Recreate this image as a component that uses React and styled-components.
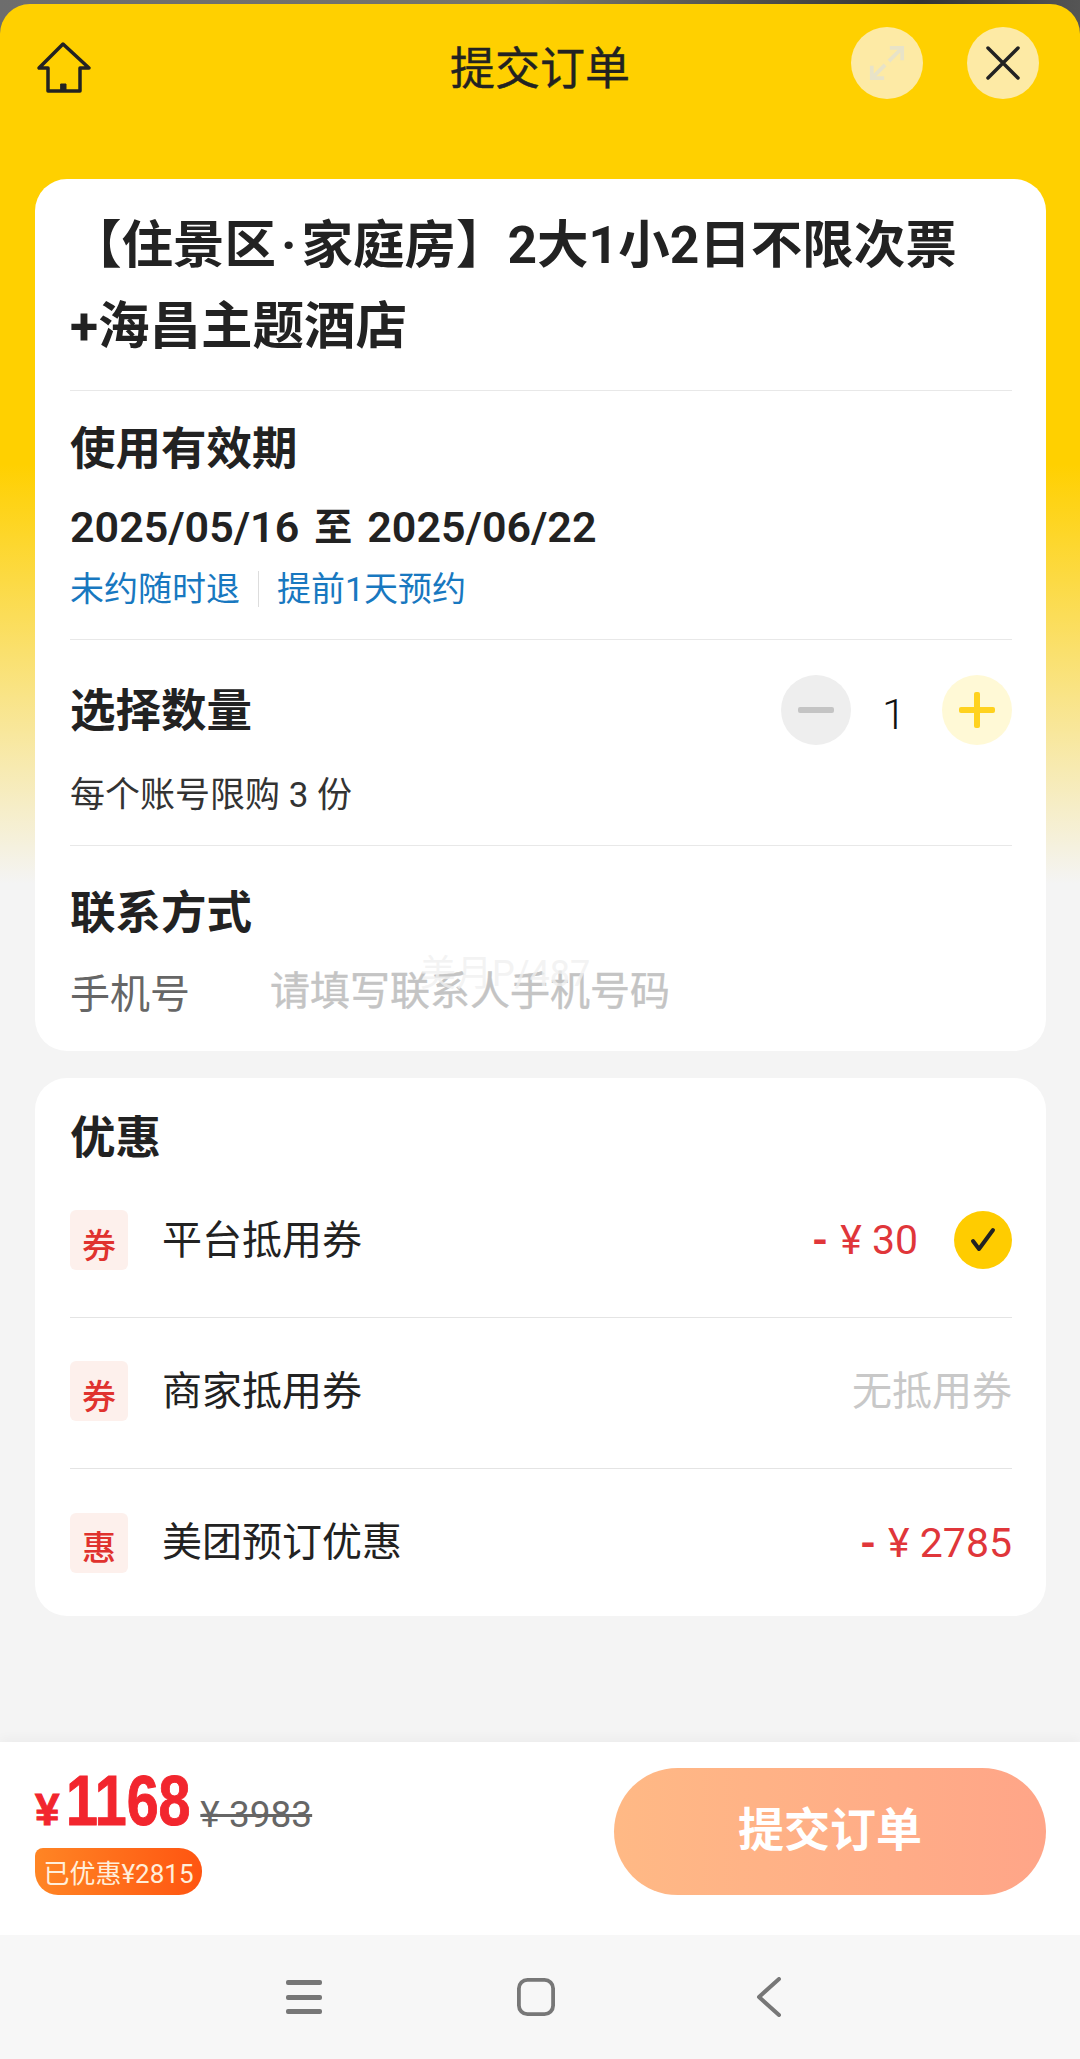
import React from 'react'
import styled, { createGlobalStyle } from 'styled-components'

const GlobalStyle = createGlobalStyle`
  html, body {
    margin: 0;
    padding: 0;
    background: #f7f7f7;
  }
  * {
    box-sizing: border-box;
  }
  body {
    font-family: Roboto, "Noto Sans CJK SC", sans-serif;
    color: #222;
  }
`

const Screen = styled.div`
  width: 1080px;
  height: 2059px;
  display: flex;
  flex-direction: column;
  padding-top: 4px;
  overflow: hidden;
  background: linear-gradient(90deg, #6d6d6d 0%, #77756a 50%, #333 85%, #555 100%);
`

const Sheet = styled.div`
  flex: 1;
  display: flex;
  flex-direction: column;
  border-radius: 30px 30px 0 0;
  overflow: hidden;
  background: linear-gradient(180deg, #ffd000 0, #ffd000 460px, #f4f4f4 880px);
`

const Header = styled.header`
  height: 175px;
  padding: 23px 41px 0 41px;
  display: grid;
  grid-template-columns: 1fr auto 1fr;
  align-items: start;
  flex-shrink: 0;
`

const HomeButton = styled.div`
  width: 60px;
  height: 60px;
  margin: 11px 0 0 -7px;
`

const PageTitle = styled.h1`
  margin: 7px 0 0;
  font-size: 45px;
  line-height: 72px;
  font-weight: 400;
  color: #222;
  -webkit-text-stroke: 0.4px #222;
`

const HeaderActions = styled.div`
  display: flex;
  justify-content: flex-end;
  gap: 44px;
`

const RoundButton = styled.div`
  width: 72px;
  height: 72px;
  border-radius: 50%;
  display: flex;
  align-items: center;
  justify-content: center;
  background: #fdeaa5;
`

const Content = styled.main`
  padding: 0 34px 0 35px;
  display: flex;
  flex-direction: column;
  gap: 27px;
`

const Card = styled.section`
  background: #fff;
  border-radius: 32px;
  padding: 0 34px 0 35px;
`

const TitleBlock = styled.div`
  padding: 26px 0 23px;
  border-bottom: 1px solid #e8e8e8;
  font-size: 51.5px;
  line-height: 81px;
  font-weight: 700;
  color: #222;
`

const TitleDot = styled.span`
  margin: 0 5px;
`

const Section = styled.div`
  padding: ${p => p.$pad};
  border-bottom: ${p => (p.$last ? 'none' : '1px solid #e8e8e8')};
`

const Heading = styled.h2`
  margin: 0;
  padding-top: 4px;
  font-size: 45.5px;
  line-height: 56px;
  font-weight: 700;
  color: #222;
`

const DateLine = styled.div`
  height: 60px;
  margin-top: 19px;
  display: flex;
  align-items: center;
  font-size: 43px;
  line-height: 60px;
  font-weight: 600;
  color: #222;
`

const DateTo = styled.span`
  margin: 0 15px;
  font-size: 38px;
`

const Tags = styled.div`
  margin-top: 10px;
  display: flex;
  align-items: center;
  font-size: 34px;
  line-height: 44px;
  color: #1878c0;
`

const TagSep = styled.span`
  width: 1px;
  height: 36px;
  margin: 0 18px;
  background: #ddd;
`

const QtyRow = styled.div`
  display: flex;
  align-items: center;
  justify-content: space-between;
`

const Stepper = styled.div`
  display: flex;
  align-items: center;
`

const StepButton = styled.div`
  width: 70px;
  height: 70px;
  border-radius: 50%;
  display: flex;
  align-items: center;
  justify-content: center;
  background: ${p => (p.$add ? '#fff9d6' : '#eeeeee')};
`

const StepValue = styled.span`
  width: 91px;
  text-align: center;
  font-size: 43px;
  font-weight: 300;
  padding: 8px 5px 0 0;
  color: #111;
`

const Limit = styled.div`
  margin-top: 29px;
  font-size: 35px;
  line-height: 44px;
  color: #333;
`

const PhoneRow = styled.div`
  position: relative;
  margin-top: 22px;
  display: flex;
  font-size: 40px;
  line-height: 56px;
`

const PhoneLabel = styled.span`
  width: 200px;
  padding-top: 3px;
  color: #666;
`

const Placeholder = styled.span`
  color: #c4c4c4;
  -webkit-text-stroke: 0.4px #c4c4c4;
`

const Watermark = styled.span`
  position: absolute;
  left: 350px;
  top: -8px;
  font-size: 36px;
  line-height: 36px;
  color: rgba(240, 240, 240, 0.8);
`

const CouponRow = styled.div`
  height: ${p => (p.$last ? '147px' : '151px')};
  padding-bottom: ${p => (p.$last ? '0' : '4px')};
  display: flex;
  align-items: center;
  border-bottom: ${p => (p.$last ? 'none' : '1px solid #e4e4e4')};
`

const CouponBadge = styled.span`
  width: 58px;
  height: 60px;
  border-radius: 6px;
  padding-top: 6px;
  flex-shrink: 0;
  display: flex;
  align-items: center;
  justify-content: center;
  background: #fdf0ec;
  color: #e0322e;
  font-size: 34px;
  font-weight: 500;
`

const CouponName = styled.span`
  flex: 1;
  margin-left: 34px;
  padding-bottom: 7px;
  font-size: 40px;
  color: #222;
`

const Amount = styled.span`
  font-size: ${p => (p.$none ? '40px' : '41px')};
  padding-bottom: ${p => (p.$none ? '7px' : '0')};
  color: ${p => (p.$none ? '#c8c8c8' : '#e0363a')};
`

const Dash = styled.span`
  margin-right: 12px;
  font-weight: 700;
`

const Check = styled.span`
  width: 58px;
  height: 58px;
  margin-left: 36px;
  border-radius: 50%;
  display: flex;
  align-items: center;
  justify-content: center;
  background: #ffcc00;
`

const Spacer = styled.div`
  flex: 1;
`

const Footer = styled.footer`
  height: 193px;
  flex-shrink: 0;
  padding: 26px 34px 0 35px;
  display: flex;
  justify-content: space-between;
  background: #fff;
  box-shadow: 0 -4px 10px rgba(0, 0, 0, 0.03);
`

const PriceBlock = styled.div`
  display: flex;
  flex-direction: column;
  align-items: flex-start;
`

const PriceLine = styled.div`
  height: 58px;
  display: flex;
  align-items: flex-end;
  color: #f2262e;
  font-weight: 700;
  font-family: "Liberation Sans", sans-serif;
`

const Yen = styled.span`
  font-size: 44px;
  line-height: 32px;
  margin-right: 7px;
  -webkit-text-stroke: 1px #f2262e;
`

const BigPrice = styled.span`
  display: inline-block;
  font-size: 70px;
  line-height: 50px;
  transform: scaleX(0.82);
  transform-origin: left bottom;
  margin-right: -28px;
  -webkit-text-stroke: 1px #f2262e;
`

const OldPrice = styled.span`
  margin: 0 0 -2px 10px;
  font-family: Roboto, sans-serif;
  font-size: 37px;
  line-height: 26px;
  font-weight: 400;
  color: #666;
  text-decoration: line-through;
  text-decoration-thickness: 3px;
`

const SavedBadge = styled.div`
  margin-top: 22px;
  width: 167px;
  height: 47px;
  border-radius: 8px 23px 23px 23px;
  display: flex;
  align-items: center;
  justify-content: center;
  font-size: 26px;
  white-space: nowrap;
  color: #ffeeda;
  background: linear-gradient(90deg, #ff8524, #ff5511);
`

const SubmitButton = styled.div`
  width: 432px;
  height: 127px;
  border-radius: 64px;
  padding-bottom: 11px;
  display: flex;
  align-items: center;
  justify-content: center;
  font-size: 46px;
  font-weight: 700;
  color: #fff;
  background: linear-gradient(90deg, #ffb985, #ffa588);
`

const NavBar = styled.nav`
  height: 124px;
  flex-shrink: 0;
  display: grid;
  grid-template-columns: 1fr 1fr 1fr;
  align-items: center;
  padding: 0 195px 0 188px;
  justify-items: center;
  background: #f7f7f7;
`

const HomeIcon = () => (
  <svg width="60" height="60" viewBox="0 0 60 60" fill="none" stroke="#222" strokeWidth="3.5" strokeLinejoin="round" strokeLinecap="round">
    <path d="M29 6 L5 30 H14 V53 H46 V30 H55 Z" />
    <rect x="27" y="46" width="5" height="7" fill="#222" strokeWidth="1" />
  </svg>
)

const ExpandIcon = () => (
  <svg width="38" height="38" viewBox="0 0 40 40" fill="none" stroke="#e8e3c8" strokeWidth="4">
    <path d="M22 18 L35 5 M23 4 H36 V17" />
    <path d="M18 22 L5 35 M4 23 V36 H17" />
  </svg>
)

const CloseIcon = () => (
  <svg width="34" height="34" viewBox="0 0 34 34" fill="none" stroke="#222" strokeWidth="3.5" strokeLinecap="round">
    <path d="M2 2 L32 32 M32 2 L2 32" />
  </svg>
)

const MinusIcon = () => (
  <svg width="36" height="36" viewBox="0 0 36 36">
    <rect x="0" y="15" width="36" height="6" rx="2" fill="#c4c4c4" />
  </svg>
)

const PlusIcon = () => (
  <svg width="36" height="36" viewBox="0 0 36 36" fill="#ffd21f">
    <rect x="0" y="15" width="36" height="6" rx="2" />
    <rect x="15" y="0" width="6" height="36" rx="2" />
  </svg>
)

const CheckIcon = () => (
  <svg width="30" height="30" viewBox="0 0 30 30" fill="none" stroke="#222" strokeWidth="4" strokeLinecap="round" strokeLinejoin="round">
    <path d="M5 16 L11 24 L25 5" />
  </svg>
)

const MenuIcon = () => (
  <svg width="36" height="36" viewBox="0 0 36 36" fill="#777">
    <rect x="0" y="1" width="36" height="5" rx="2" />
    <rect x="0" y="16" width="36" height="5" rx="2" />
    <rect x="0" y="30" width="36" height="5" rx="2" />
  </svg>
)

const SquareIcon = () => (
  <svg width="38" height="38" viewBox="0 0 40 40" fill="none" stroke="#777" strokeWidth="4">
    <rect x="2" y="2" width="36" height="36" rx="9" />
  </svg>
)

const BackIcon = () => (
  <svg width="26" height="40" viewBox="0 0 26 40" fill="none" stroke="#777" strokeWidth="4" strokeLinecap="round" strokeLinejoin="round">
    <path d="M23 2 L3 20 L23 38" />
  </svg>
)

const coupons = [
  { badge: '券', name: '平台抵用券', amount: '¥ 30', checked: true },
  { badge: '券', name: '商家抵用券', none: '无抵用券' },
  { badge: '惠', name: '美团预订优惠', amount: '¥ 2785', last: true },
]

const App = () => (
  <Screen>
    <GlobalStyle />
    <Sheet>
      <Header>
        <HomeButton><HomeIcon /></HomeButton>
        <PageTitle>提交订单</PageTitle>
        <HeaderActions>
          <RoundButton><ExpandIcon /></RoundButton>
          <RoundButton><CloseIcon /></RoundButton>
        </HeaderActions>
      </Header>
      <Content>
        <Card>
          <TitleBlock>【住景区<TitleDot>·</TitleDot>家庭房】2大1小2日不限次票<br />+海昌主题酒店</TitleBlock>
          <Section $pad="27px 0 28px">
            <Heading>使用有效期</Heading>
            <DateLine>2025/05/16<DateTo>至</DateTo>2025/06/22</DateLine>
            <Tags>
              <span>未约随时退</span>
              <TagSep />
              <span>提前1天预约</span>
            </Tags>
          </Section>
          <Section $pad="35px 0 27px">
            <QtyRow>
              <Heading>选择数量</Heading>
              <Stepper>
                <StepButton><MinusIcon /></StepButton>
                <StepValue>1</StepValue>
                <StepButton $add><PlusIcon /></StepButton>
              </Stepper>
            </QtyRow>
            <Limit>每个账号限购 3 份</Limit>
          </Section>
          <Section $pad="36px 0 28px" $last>
            <Heading>联系方式</Heading>
            <PhoneRow>
              <PhoneLabel>手机号</PhoneLabel>
              <Placeholder>请填写联系人手机号码</Placeholder>
              <Watermark>美月P/487</Watermark>
            </PhoneRow>
          </Section>
        </Card>
        <Card>
          <Section $pad="29px 0 0" $last>
            <Heading>优惠</Heading>
          </Section>
          {coupons.map(c => (
            <CouponRow key={c.name} $last={c.last}>
              <CouponBadge>{c.badge}</CouponBadge>
              <CouponName>{c.name}</CouponName>
              {c.none ? (
                <Amount $none>{c.none}</Amount>
              ) : (
                <Amount><Dash>-</Dash>{c.amount}</Amount>
              )}
              {c.checked && <Check><CheckIcon /></Check>}
            </CouponRow>
          ))}
        </Card>
      </Content>
      <Spacer />
      <Footer>
        <PriceBlock>
          <PriceLine>
            <Yen>¥</Yen>
            <BigPrice>1168</BigPrice>
            <OldPrice>¥ 3983</OldPrice>
          </PriceLine>
          <SavedBadge>已优惠¥2815</SavedBadge>
        </PriceBlock>
        <SubmitButton>提交订单</SubmitButton>
      </Footer>
      <NavBar>
        <MenuIcon />
        <SquareIcon />
        <BackIcon />
      </NavBar>
    </Sheet>
  </Screen>
)

export default App
